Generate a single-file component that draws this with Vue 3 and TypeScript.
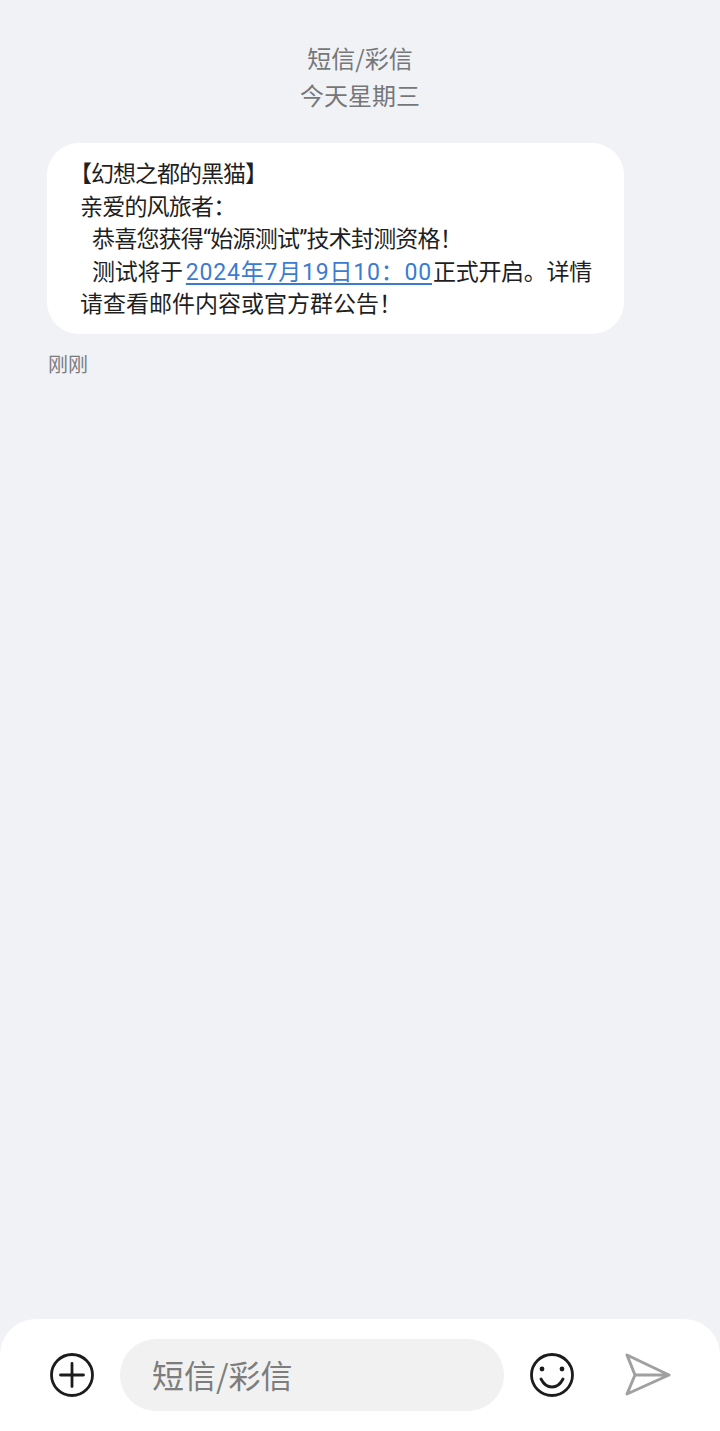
<script setup lang="ts">
const placeholder = "短信/彩信";
</script>

<template>
  <div class="page">
    <header class="head">
      <div>短信/彩信</div>
      <div>今天星期三</div>
    </header>

    <main class="thread">
      <div class="bubble">
        <div class="title">【幻想之都的黑猫】</div>
        <div class="tight">亲爱的风旅者：</div>
        <div class="indent tight">恭喜您获得“始源测试”技术封测资格！</div>
        <div class="indent line4">测试将于<a class="link">2024年7月19日10：00</a>正式开启。详情</div>
        <div>请查看邮件内容或官方群公告！</div>
      </div>
      <div class="time">刚刚</div>
    </main>

    <footer class="bar">
      <svg class="icon" viewBox="0 0 48 48" fill="none" stroke="#1c1c1c" stroke-width="2.800" stroke-linecap="round">
        <circle cx="24" cy="24" r="20.500" />
        <path d="M24 12.500v23M12.500 24h23" />
      </svg>
      <div class="input">{{ placeholder }}</div>
      <svg class="icon smile" viewBox="0 0 48 48" fill="none" stroke="#1c1c1c" stroke-width="2.800" stroke-linecap="round">
        <circle cx="24" cy="24" r="20.500" />
        <path d="M13 28c2.500 5 6.500 8 11 8s8.500-3 11-8" />
        <circle cx="14" cy="18" r="2.400" fill="#1c1c1c" stroke="none" />
        <circle cx="34" cy="18" r="2.400" fill="#1c1c1c" stroke="none" />
      </svg>
      <svg class="icon send" viewBox="0 0 48 48" fill="none" stroke="#a0a0a0" stroke-width="3" stroke-linecap="round" stroke-linejoin="round">
        <path d="M3 4l42 20-42 19 8-19zM11 24h34" />
      </svg>
    </footer>
  </div>
</template>

<style>
body {
  background: #f0f2f6;
}
</style>

<style scoped>
.page {
  height: 1431px;
  display: flex;
  flex-direction: column;
  background: #f0f2f6;
  font-family: "Noto Sans CJK SC", "Noto Sans", sans-serif;
  overflow: hidden;
}
.head {
  padding-top: 39px;
  text-align: center;
  font-size: 24px;
  line-height: 37px;
  color: #767779;
}
.thread {
  flex: 1;
  padding: 30px 0 0 47px;
}
.bubble {
  box-sizing: border-box;
  width: 577px;
  height: 191px;
  padding: 16px 0 0 33px;
  background: #fff;
  border-radius: 32px;
  font-family: Roboto, "Noto Sans CJK SC", sans-serif;
  font-size: 23px;
  line-height: 32.500px;
  color: #1f1f1f;
}
.title {
  margin-left: -11px;
  letter-spacing: -1px;
}
.tight {
  letter-spacing: -0.800px;
}
.indent {
  padding-left: 12px;
}
.line4 {
  letter-spacing: -0.300px;
}
.link {
  margin: 0 1px 0 3px;
  color: #3b7cd0;
  letter-spacing: 0.800px;
  text-decoration: underline;
  text-underline-offset: 3px;
}
.time {
  margin: 16px 0 0 1px;
  font-size: 20px;
  line-height: 28px;
  color: #7b7c7e;
}
.bar {
  height: 112px;
  display: flex;
  align-items: flex-start;
  background: #fff;
  border-radius: 36px 36px 0 0;
}
.icon {
  width: 48px;
  height: 48px;
  margin: 32px 0 0 48px;
  flex: none;
}
.input {
  box-sizing: border-box;
  width: 384px;
  height: 72px;
  margin: 20px 0 0 24px;
  padding-left: 32px;
  border-radius: 36px;
  background: #f1f1f1;
  font-size: 32px;
  line-height: 70px;
  color: #7d7d7d;
}
.smile {
  margin-left: 24px;
}
.send {
  margin-left: 48px;
}
</style>
